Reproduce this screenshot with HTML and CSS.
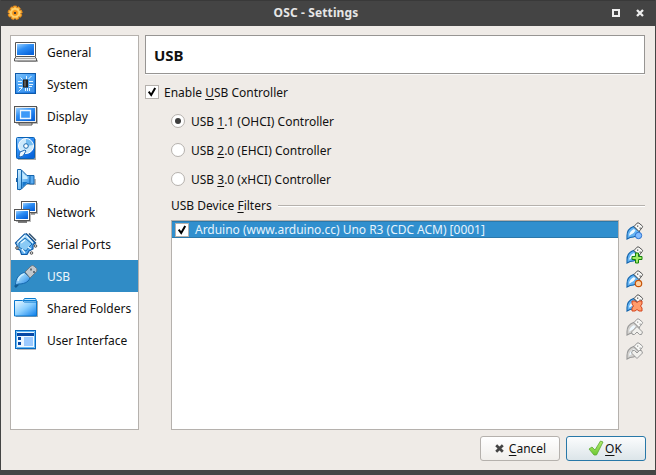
FILE: index.html
```html
<!DOCTYPE html>
<html lang="en">
<head>
<meta charset="utf-8">
<title>OSC - Settings</title>
<link rel="stylesheet" href="styles.css">
</head>
<body>
<svg class="defs" width="0" height="0" aria-hidden="true">
  <defs>
    <linearGradient id="screen" x1="0" y1="0" x2=".7" y2="1"><stop offset="0" stop-color="#9ad0ff"/><stop offset=".45" stop-color="#2f8ff5"/><stop offset="1" stop-color="#0864dc"/></linearGradient>
    <linearGradient id="sky" x1="0" y1="0" x2="1" y2="1"><stop offset="0" stop-color="#d4f0ff"/><stop offset=".5" stop-color="#7cc2f6"/><stop offset="1" stop-color="#187de0"/></linearGradient>
    <linearGradient id="folder" x1="0" y1="0" x2="1" y2="1"><stop offset="0" stop-color="#f2fbff"/><stop offset=".5" stop-color="#8acfff"/><stop offset="1" stop-color="#087bea"/></linearGradient>
    <linearGradient id="tick" x1="0" y1="0" x2="0" y2="1"><stop offset="0" stop-color="#b5ed70"/><stop offset="1" stop-color="#6cc932"/></linearGradient>
    <radialGradient id="gold"><stop offset=".2" stop-color="#ff9f1e"/><stop offset=".6" stop-color="#ffd877"/><stop offset="1" stop-color="#f39a16"/></radialGradient>
    <g id="plug">
      <path d="M1 17V13.500C1 9.500 3.500 6 7.500 4.500L13.500 9.500C13 13 9 15.500 4 15.500Z" fill="var(--plug)" stroke="var(--edge)" stroke-width="1.100"/>
      <path d="M3 13.500Q3.500 9 8 7L9.500 8.500Q8 12.500 3.500 13.500Z" fill="#eff9ff"/>
      <path d="M4.500 13.500Q8.500 12.500 10 9" fill="none" stroke="var(--plug)" stroke-width="1.200"/>
      <path d="M8 4.500L11 1.200Q12 .5 13 1.200L16.200 3.800Q17 4.700 16.200 5.600L13 9.500Z" fill="#f8f8f6" stroke="var(--metal)" stroke-width="1"/>
      <path d="M11 3.500h1.300v1.300H11zM13.500 5.500h1.300v1.300h-1.300z" fill="var(--metal)"/>
    </g>
  </defs>
</svg>
<div class="window">
  <header class="titlebar">
    <svg class="gear" width="16" height="16" viewBox="0 0 16 16"><path d="M6.500 1h3l.4 2 1.400-1.300 2 1.700-.9 1.900 2-.2.900 2.600-1.900.9 1.600 1.300-1.400 2.300-2-.5.100 2-2.500.9L8 12.900l-1.300 1.700-2.400-.9.100-2-2 .3L1 9.800l1.700-1.200L.9 7.400l1-2.500 2 .3-.7-2 2-1.500L6.400 3z" fill="url(#gold)" stroke="#e88a1c" stroke-width=".8"/><circle cx="8" cy="8" r="2.700" fill="#f59516"/><rect x="7" y="7" width="2" height="2" fill="#48413a"/></svg>
    <h1>OSC - Settings</h1>
    <div class="controls">
      <svg width="8" height="8" viewBox="0 0 8 8"><path d="M1 1h6v6H1z" fill="none" stroke="#eee" stroke-width="2"/></svg>
      <svg width="8" height="8" viewBox="0 0 8 8"><path d="M1 1l6 6M7 1L1 7" stroke="#eee" stroke-width="2.300"/></svg>
    </div>
  </header>
  <main class="content">
    <nav class="sidebar">
      <a class="item"><svg viewBox="0 0 24 24"><path d="M2 20h22v2H4z" fill="#bbb"/><path d="M1.500 2.500h20v14h-20z" fill="#fff" stroke="#555"/><path d="M3 4h17v11H3z" fill="url(#screen)"/><path d="M2.500 16.500h18l2 2v2.500H.5v-2.500z" fill="#eee" stroke="#555"/><path d="M1 18.500h21" stroke="#aaa"/></svg><span>General</span></a>
      <a class="item"><svg viewBox="0 0 24 24"><path d="M3 3h19v19H3z" fill="#aaa"/><rect x="1.500" y="1.500" width="20" height="20" fill="url(#screen)" stroke="#0f5baa"/><path d="M2.500 2.500h18v18h-18z" fill="#68b8f5" opacity=".55"/><path d="M4 9.500h4M4 12.500h4M5 15.500h3M15 9.500h4M15 12.500h4M15 14.500h3M12.500 4v3M17.500 4l-3 3M8.500 15.500l-4 4M11.500 16v3M13.500 16v3M15.500 16v3M6.500 5.500l2 2" stroke="#e5f5ff"/><path d="M9 7.500h5v8H9z" fill="#222"/><path d="M10 8.500h2v6h-2z" fill="#555"/></svg><span>System</span></a>
      <a class="item"><svg viewBox="0 0 24 24"><path d="M2 3h22v17H2z" fill="#bbb"/><rect x=".5" y="2.500" width="22" height="16" fill="#eee" stroke="#555"/><path d="M2 4h19v13H2z" fill="url(#screen)"/><path d="M6.500 6.500h10v8h-10z" fill="#3d9af8" stroke="#eef8ff" stroke-width="1.300"/><path d="M5 19h13v2H5z" fill="#eee" stroke="#555"/></svg><span>Display</span></a>
      <a class="item"><svg viewBox="0 0 24 24"><path d="M4 3h18v21H4z" fill="#aaa"/><rect x="2.500" y="1.500" width="18" height="21" rx="1" fill="url(#screen)" stroke="#0961b5"/><circle cx="12" cy="10" r="7.500" fill="#cdeafc" stroke="#fff"/><path d="M12 10V3A7 7 0 0 1 19 9Z" fill="#76bdf0"/><circle cx="12" cy="10" r="2.300" fill="#fff" stroke="#1869ad"/><path d="M5 20l1-4 5-2 1 1-3 5-3 1z" fill="#eff8ff" stroke="#276cb4"/></svg><span>Storage</span></a>
      <a class="item"><svg viewBox="0 0 24 24"><path d="M5 5l7 6h10v6H12l-7 6z" fill="#bbb"/><path d="M15.500 7.500h4.500v8.500h-4.500z" fill="#5bacf0" stroke="#1565ad"/><path d="M3.500 1.500H7L13 7.500h3v8h-3l-6 6H3.500z" fill="url(#sky)" stroke="#1565ad"/><path d="M7.500 2v19" stroke="#1868ad"/><path d="M8.500 5l5 4v2h-5z" fill="#c7ebff"/><path d="M8.500 14h5l-5 5z" fill="#1677cc"/><path d="M2 10h1v4H2z" fill="#1b63aa"/></svg><span>Audio</span></a>
      <a class="item"><svg viewBox="0 0 24 24"><path d="M9 3h15v11H9zM2 11h15v11H2z" fill="#bbb"/><rect x="7.500" y="1.500" width="15" height="11" fill="#fff" stroke="#555"/><path d="M9 3h12v8H9z" fill="url(#screen)"/><path d="M17 14h4" stroke="#555"/><rect x=".5" y="9.500" width="15" height="11" fill="#fff" stroke="#555"/><path d="M2 11h12v8H2z" fill="url(#screen)"/><path d="M4 22h9" stroke="#555" stroke-width="1.500"/></svg><span>Network</span></a>
      <a class="item"><svg viewBox="0 0 24 24"><path d="M12 1.500L22 11.500M15 1.500l7 7" fill="none" stroke="#395773" stroke-width="1.600"/><path d="M1.500 11L10.500 2h2L21 11l-2 2v4l-4 2-2 3.500H7.500L6 18l-3-1v-3.500z" fill="url(#sky)" stroke="#105ba7" stroke-width="1.200"/><path d="M3.500 10.500L11 3.500M12.500 4l6.500 7" stroke="#eaf9ff" stroke-width="1.300"/><path d="M5 11l6-5 7 6-3 3-3 4-4-2-3-2z" fill="#8acaf5" stroke="#176bb2"/><path d="M7 11l4-3M8 17l3 4M14 15l3 2" stroke="#eaf9ff" stroke-width="1.300"/><g fill="#ddd" stroke="#555"><circle cx="3" cy="16" r="1.300"/><circle cx="21.500" cy="14" r="1.300"/><circle cx="17.500" cy="21" r="1.300"/></g></svg><span>Serial Ports</span></a>
      <a class="item selected"><svg viewBox="0 0 24 24"><path d="M1 23l3-3" stroke="#12588e" stroke-width="2.500"/><path d="M1.500 21c0-6 3-11 9-12.500L16 14c-2 5-7 6-11.500 6z" fill="url(#sky)" stroke="#1568ad"/><path d="M4 17q1-5 6-7" fill="none" stroke="#c8edff" stroke-width="1.500"/><path d="M11 8l6-6q1.500-1 3 0l2.500 2.500q1 1.500 0 3L16 14z" fill="#c2c9ce" stroke="#6a7a86"/><path d="M16 4.500h2v2h-2zM19 7h2v2h-2z" fill="#64717b"/></svg><span>USB</span></a>
      <a class="item"><svg viewBox="0 0 24 24"><path d="M2 5h22v16H2z" fill="#aaa"/><path d="M8.500 6l2-3.500h11l1 2v15h-14z" fill="#c7ebff" stroke="#087bd0"/><path d="M.5 4.500h8l2 1.500h12v14H.5z" fill="url(#folder)" stroke="#0877ce"/><path d="M10 4.500h12" stroke="#087bd0"/></svg><span>Shared Folders</span></a>
      <a class="item"><svg viewBox="0 0 24 24"><path d="M3 4h19v18H3z" fill="#bbb"/><rect x="1.500" y="2.500" width="20" height="18" fill="#eef7ff" stroke="#0968bf"/><path d="M2.500 3.500h18v16h-18z" fill="none" stroke="#63b8f5"/><path d="M3 5h17v3H3z" fill="#0749a7"/><path d="M4 9h3v3H4zM4 14h3v3H4z" fill="#0749a7"/><path d="M10 9h9v9h-9z" fill="#9ccaff"/></svg><span>User Interface</span></a>
    </nav>
    <section class="page">
      <h2>USB</h2>
      <label class="option"><span class="check"><svg viewBox="0 0 12 12"><path d="M2.700 5.700l2.500 3.300L9.200 2" fill="none" stroke="#000" stroke-width="2"/></svg></span><span>Enable <u>U</u>SB Controller</span></label>
      <div class="settings">
        <label class="option radio-row"><span class="radio on"></span><span>USB <u>1</u>.1 (OHCI) Controller</span></label>
        <label class="option radio-row"><span class="radio"></span><span>USB <u>2</u>.0 (EHCI) Controller</span></label>
        <label class="option radio-row"><span class="radio"></span><span>USB <u>3</u>.0 (xHCI) Controller</span></label>
        <div class="group"><span>USB Device <u>F</u>ilters</span><i></i></div>
        <div class="filters">
          <div class="list"><div class="device"><span class="check"><svg viewBox="0 0 12 12"><path d="M2.700 5.700l2.500 3.300L9.200 2" fill="none" stroke="#000" stroke-width="2"/></svg></span><span class="device-name">Arduino (www.arduino.cc) Uno R3 (CDC ACM) [0001]</span></div></div>
          <div class="tools">
            <svg viewBox="0 0 18 18"><use href="#plug"/><circle cx="12.500" cy="13.500" r="3.200" fill="#84bdff" stroke="#2b72d0"/></svg>
            <svg viewBox="0 0 18 18"><use href="#plug"/><path d="M9.500 7h3v3.500H16v3h-3.500V17h-3v-3.500H6v-3h3.500z" fill="#a3ea68" stroke="#16830b"/></svg>
            <svg viewBox="0 0 18 18"><use href="#plug"/><circle cx="12.500" cy="13.500" r="3.200" fill="#ffd0a0" stroke="#c65308" stroke-width="1.200"/></svg>
            <svg viewBox="0 0 18 18"><use href="#plug"/><path d="M6 7h3l2 1.500L13 7h3v3l-1.500 2 1.500 2v3h-3l-2-1.500L9 17H6v-3l1.500-2L6 10z" fill="#ff9c6c" stroke="#d5441c"/></svg>
            <svg class="off" viewBox="0 0 18 18"><use href="#plug"/><path d="M11 8.500l5.500 5.500-1 2.500h-2l-2.500-2.500-2.500 2.500h-2l-1-2.500z" fill="#f1f0ed" stroke="#999"/></svg>
            <svg class="off" viewBox="0 0 18 18"><use href="#plug"/><path d="M11 16.500L5.500 11l1-2.500h2L11 11l2.500-2.500h2l1 2.500z" fill="#f1f0ed" stroke="#999"/></svg>
          </div>
        </div>
      </div>
    </section>
  </main>
  <footer class="actions">
    <button><svg width="9" height="9" viewBox="0 0 9 9"><path d="M1.200 1.200l6.600 6.600M7.800 1.200L1.200 7.800" stroke="#444" stroke-width="2.700"/></svg><span><u>C</u>ancel</span></button>
    <button class="primary"><svg width="16" height="16" viewBox="0 0 16 16"><path d="M1 9l3-2 3 3 5.500-9L15 2 8.500 15H6z" fill="url(#tick)" stroke="#5aa832" stroke-width=".8" stroke-linejoin="round"/></svg><span><u>O</u>K</span></button>
  </footer>
</div>
</body>
</html>
```
FILE: styles.css
```css
* { box-sizing: border-box; }
body { margin: 0; font: 12px/16px "Noto Sans", sans-serif; color: #111; background: #444; }
svg { display: block; flex: none; }
.defs { height: 0; }
.window { width: 656px; height: 475px; display: flex; flex-direction: column; border: solid #444; border-width: 0 1px 5px; background: #efebe7; }
.titlebar { height: 26px; flex: none; display: grid; grid-template-columns: 28px 1fr 52px; align-items: center; background: #444; border-top: 1px solid #393939; }
.gear { margin-left: 6px; margin-top: -1px; }
h1 { margin: 0; padding-bottom: 2px; font-size: 12px; line-height: 16px; letter-spacing: .12px; text-align: center; color: #e6e6e6; }
.controls { display: flex; gap: 16px; justify-content: flex-end; padding: 0 11px 1px 0; }
.content { display: flex; gap: 6px; height: 404px; padding: 9px 10px 0 9px; }
.sidebar { width: 129px; height: 395px; flex: none; border: 1px solid #b5b1ad; background: #fff; }
.item { display: flex; align-items: center; gap: 9px; height: 32px; padding-left: 3px; white-space: nowrap; }
.item svg { width: 24px; height: 24px; }
.item span { padding-top: 2px; }
.selected { background: #308cc6; color: #eef6fb; }
.page { flex: 1; min-width: 0; }
h2 { margin: 0; width: 500px; height: 39px; padding: 0 8px; border: 1px solid #979593; background: #fff; font-size: 15px; line-height: 39px; box-shadow: 0 1px #fafafa; }
.option { display: flex; align-items: center; gap: 5px; height: 29px; }
.page > .option { margin-top: 4px; }
.option .check, .radio { margin-bottom: 1px; }
u { text-decoration: underline; text-decoration-thickness: 1px; text-underline-offset: 2px; text-decoration-skip-ink: none; }
.check { width: 14px; height: 14px; flex: none; border: 1px solid #b5b1ad; background: #fff; }
.check svg { width: 12px; height: 12px; }
.settings { padding-left: 26px; }
.radio { width: 14px; height: 14px; border: 1px solid #b5b1ad; border-radius: 50%; background: #fff; display: grid; place-items: center; }
.radio.on::before { content: ""; width: 6px; height: 6px; border-radius: 50%; background: #3d3d3d; }
.radio-row { gap: 6px; }
.group { height: 26px; display: flex; align-items: center; gap: 6px; padding-bottom: 2px; white-space: nowrap; }
.group i { flex: 1; height: 2px; border-top: 1px solid #b5b1ad; background: #fff; }
.filters { display: flex; gap: 7px; }
.list { width: 448px; height: 210px; border: 1px solid #b5b1ad; background: #fff; }
.device { display: flex; align-items: center; height: 17px; padding-left: 3px; background: #308fce; color: #e5f3fc; border: solid #2b78aa; border-width: 1px 0; }
.device-name { padding-left: 6px; letter-spacing: -.02px; }
.tools { --plug: #65b4f3; --edge: #1264ad; --metal: #555; display: flex; flex-direction: column; gap: 6px; padding-top: 2px; }
.tools svg { width: 18px; height: 18px; }
.tools .off { --plug: #d5d3d0; --edge: #999; --metal: #999; }
.actions { display: flex; justify-content: flex-end; gap: 6px; padding: 6px 9px 0 0; }
button { display: flex; align-items: center; justify-content: center; gap: 5px; width: 80px; height: 25px; padding: 0; border: 1px solid #b5b1ad; border-radius: 3px; background: linear-gradient(#fff, #f0eeeb); color: #111; font: inherit; }
button:first-child { padding-left: 1px; }
.primary { gap: 1px; padding-right: 2px; border-color: #2878a8; background: linear-gradient(#fbfcfd, #dce5e9); }
.primary svg { margin-bottom: 1px; }
```
